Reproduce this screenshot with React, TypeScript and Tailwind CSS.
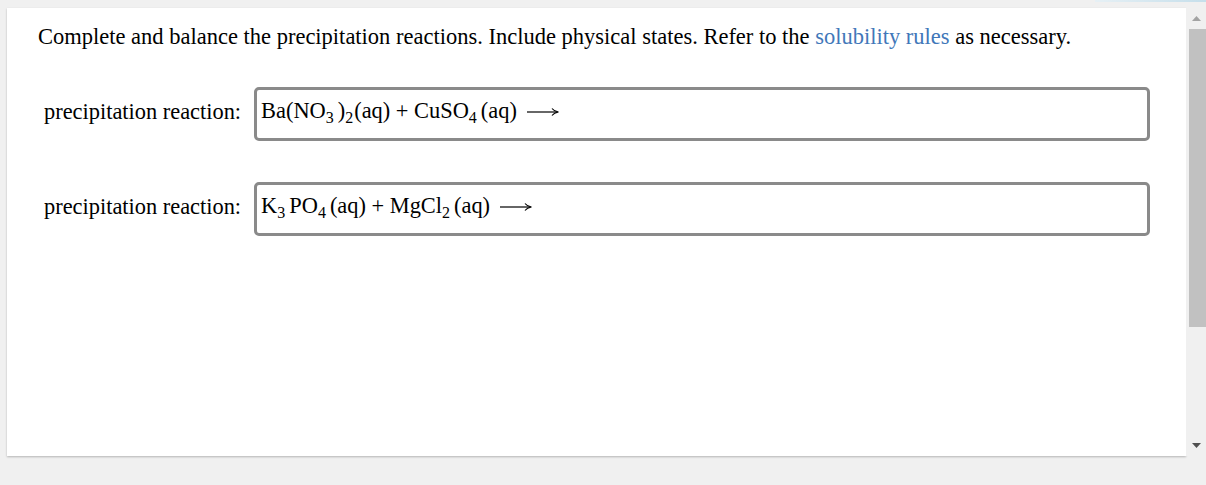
import React from "react";

const serif = { fontFamily: '"Liberation Serif", "Times New Roman", serif' };

function Sub({ children, space }: { children: React.ReactNode; space?: boolean }) {
  return (
    <span className={`text-[16px] align-[-5px] ${space ? "mr-[4px]" : "mr-[1px]"}`}>{children}</span>
  );
}

function Arrow() {
  return (
    <svg className="ml-[10px] inline-block align-middle" width="32" height="10" viewBox="0 0 32 10">
      <line x1="0" y1="5" x2="30" y2="5" stroke="#000" strokeWidth="1.2" />
      <path d="M25 1.5 Q27 4.3 31.5 5 Q27 5.7 25 8.5" fill="none" stroke="#000" strokeWidth="1.1" />
    </svg>
  );
}

function Row({ children }: { children: React.ReactNode }) {
  return (
    <div className="flex items-center">
      <div className="pl-[37px] mr-[13px] pb-[4px] text-[22.4px] text-black">precipitation reaction:</div>
      <div className="h-[54px] w-[896px] rounded-[5px] border-[3px] border-[#8a8a8a] pl-[4px] flex items-center text-[22.4px] text-black pb-[5px]">
        <span className="whitespace-nowrap">{children}</span>
      </div>
    </div>
  );
}

export default function App() {
  return (
    <div className="w-[1206px] h-[485px] bg-[#f0f0f0] overflow-hidden" style={serif}>
      <div className="h-[8px] flex justify-end">
        <div className="w-[111px] h-[2px] bg-gradient-to-r from-[#e6f0f5] to-[#c6dfeb]" />
      </div>
      <div className="flex">
        <div className="ml-[7px] w-[1179px] h-[448px] bg-white shadow-[0_1px_2px_rgba(0,0,0,0.25)]">
          <div className="pl-[31px] pt-[16px] text-[22.5px] leading-[26px] text-black whitespace-nowrap">
            Complete and balance the precipitation reactions. Include physical states. Refer to the{" "}
            <span className="text-[#4177b9]">solubility rules</span> as necessary.
          </div>
          <div className="mt-[37px] flex flex-col gap-[41px]">
            <Row>
              Ba(NO<Sub space>3</Sub>)<Sub>2</Sub>(aq) + CuSO<Sub space>4</Sub>(aq)
              <Arrow />
            </Row>
            <Row>
              K<Sub space>3</Sub>PO<Sub space>4</Sub>(aq) + MgCl<Sub space>2</Sub>(aq)
              <Arrow />
            </Row>
          </div>
        </div>
        <div className="w-[20px] h-[448px] bg-[#f0f0f0] flex flex-col items-center">
          <div className="h-[21px] w-full flex items-center justify-center">
            <svg width="9" height="5" viewBox="0 0 9 5">
              <polygon points="0,5 9,5 4.5,0" fill="#a3a3a3" />
            </svg>
          </div>
          <div className="ml-[2px] w-[17px] h-[298px] bg-[#c1c1c1]" />
          <div className="flex-1" />
          <div className="h-[21px] w-full flex items-center justify-center">
            <svg width="9" height="5" viewBox="0 0 9 5">
              <polygon points="0,0 9,0 4.5,5" fill="#505050" />
            </svg>
          </div>
        </div>
      </div>
    </div>
  );
}
